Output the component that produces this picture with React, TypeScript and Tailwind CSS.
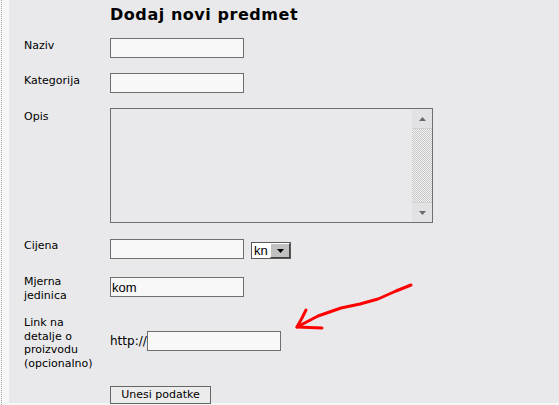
import React from 'react';

const labelCls = "w-[86px] shrink-0 text-[11px] leading-[13.5px] text-black font-['DejaVu_Sans',sans-serif]";
const inputCls = "w-[134px] h-[20px] border border-[#6e6e6e] bg-[#f8f8f8] px-[1px] text-[13px] font-['Liberation_Sans',Arial,sans-serif] text-black outline-none";

const Arrow: React.FC = () => (
  <svg
    className="absolute left-0 top-0 pointer-events-none"
    width="559"
    height="405"
    viewBox="0 0 559 405"
  >
    <polyline
      points="411,285 396,291 378,299 360,304 341,308 318,316 297,327"
      fill="none"
      stroke="#ff0000"
      strokeWidth="3"
      strokeLinecap="round"
      strokeLinejoin="round"
    />
    <polyline
      points="306,310 302,318 297,327 322,328"
      fill="none"
      stroke="#ff0000"
      strokeWidth="3"
      strokeLinecap="round"
      strokeLinejoin="round"
    />
  </svg>
);

const FakeTextarea: React.FC = () => (
  <div className="w-[323px] h-[115px] border border-[#6e6e6e] bg-[#e9e9eb] flex justify-end">
    <div className="w-[20px] h-full flex flex-col">
      <div className="h-[20px] bg-[#e2e2e4] border-b border-[#d0d0d0] flex items-center justify-center">
        <svg width="7" height="4" viewBox="0 0 7 4">
          <polygon points="3.5,0 7,4 0,4" fill="#6a6a6a" />
        </svg>
      </div>
      <div className="flex-1 bg-[image:repeating-conic-gradient(#c6c6c6_0%_25%,#f4f4f4_0%_50%)] bg-[length:2px_2px]" />
      <div className="h-[20px] bg-[#e2e2e4] border-t border-[#d0d0d0] flex items-center justify-center">
        <svg width="7" height="4" viewBox="0 0 7 4">
          <polygon points="0,0 7,0 3.5,4" fill="#6a6a6a" />
        </svg>
      </div>
    </div>
  </div>
);

const CurrencySelect: React.FC = () => (
  <div className="ml-[7px] mt-[3px] w-[40px] h-[17px] border border-[#5a5a5a] bg-white flex items-stretch">
    <span className="w-[18px] pl-[2px] text-[13px] leading-[15px] font-['Liberation_Sans',Arial,sans-serif] text-black">
      kn
    </span>
    <div className="flex-1 bg-[#c0c0c0] border-t border-l border-t-white border-l-white border-b border-r border-b-[#404040] border-r-[#404040] flex items-center justify-center">
      <svg width="7" height="4" viewBox="0 0 7 4">
        <polygon points="0,0 7,0 3.5,4" fill="#000" />
      </svg>
    </div>
  </div>
);

export default function App() {
  return (
    <div className="relative w-[559px] h-[405px] flex bg-[#f6f6f6] overflow-hidden">
      <div className="w-[9px] shrink-0 bg-[#f6f6f6] flex">
        <div className="ml-[1px] h-full border-l border-dotted border-[#a8a8a8]" />
      </div>
      <div className="flex-1 h-[403px] bg-[#e9e9eb] pl-[15px] flex flex-col">
        <h1 className="ml-[86px] mt-[5px] h-[19px] text-[16px] leading-[19px] tracking-[0.55px] font-bold font-['DejaVu_Sans',sans-serif] text-black">
          Dodaj novi predmet
        </h1>

        <div className="mt-[14px] flex items-start">
          <div className={`${labelCls} pt-[1px]`}>Naziv</div>
          <input className={inputCls} />
        </div>

        <div className="mt-[15px] flex items-start">
          <div className={`${labelCls} pt-[1px]`}>Kategorija</div>
          <input className={inputCls} />
        </div>

        <div className="mt-[15px] flex items-start">
          <div className={`${labelCls} pt-[2px]`}>Opis</div>
          <FakeTextarea />
        </div>

        <div className="mt-[16px] flex items-start">
          <div className={`${labelCls} pt-[0px]`}>Cijena</div>
          <input className={inputCls} />
          <CurrencySelect />
        </div>

        <div className="mt-[16px] flex items-start">
          <div className={labelCls}>
            Mjerna
            <br />
            jedinica
          </div>
          <input className={`${inputCls} mt-[2px]`} defaultValue="kom" />
        </div>

        <div className="mt-[14px] flex items-start">
          <div className={labelCls}>
            Link na
            <br />
            detalje o
            <br />
            proizvodu
            <br />
            (opcionalno)
          </div>
          <div className="mt-[15px] flex items-center">
            <span className="w-[37px] text-[12px] font-['DejaVu_Sans',sans-serif] text-black">http://</span>
            <input className={inputCls} />
          </div>
        </div>

        <div className="mt-[16px] flex">
          <div className="w-[86px] shrink-0" />
          <button className="w-[101px] h-[18px] border border-[#666] bg-[#ececec] text-[11px] leading-[16px] font-['DejaVu_Sans',sans-serif] text-black">
            Unesi podatke
          </button>
        </div>
      </div>
      <Arrow />
    </div>
  );
}
